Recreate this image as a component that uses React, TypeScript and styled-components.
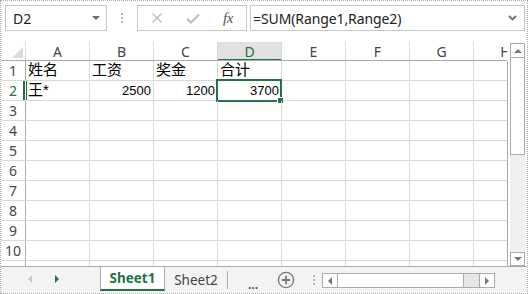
import React from 'react';
import styled, { createGlobalStyle } from 'styled-components';

const GREEN = '#217346';
const GRID = '#d9d9d9';
const FRAME = '#ababab';
const UI_FONT = '"Noto Sans", "Open Sans", sans-serif';
const CELL_FONT = '"Liberation Sans", "Noto Sans CJK SC", sans-serif';

const Global = createGlobalStyle`
  html, body { margin: 0; padding: 0; background: #fff; }
  body { width: 528px; height: 294px; overflow: hidden; }
`;

const Frame = styled.div`
  width: 528px;
  height: 294px;
  box-sizing: border-box;
  border: 1px dotted #a9a9a9;
  display: flex;
  flex-direction: column;
  background: #fff;
  font-family: ${UI_FONT};
  color: #333;
  overflow: hidden;
`;

/* ---------- formula bar ---------- */
const FormulaBar = styled.div`
  display: flex;
  align-items: stretch;
  height: 26px;
  padding: 4px 2px 0 4px;
  margin-bottom: 11px;
  flex: none;
`;

const NameBox = styled.div`
  width: 102px;
  box-sizing: border-box;
  border: 1px solid #c6c6c6;
  display: flex;
  align-items: center;
  justify-content: space-between;
  padding: 0 6px 0 7px;
  font-size: 14px;
  color: #222;
`;

const DropTriangle = styled.span`
  width: 0;
  height: 0;
  border-left: 4px solid transparent;
  border-right: 4px solid transparent;
  border-top: 4px solid #6f6f6f;
`;

const Grip = styled.div<{ $w: number; $h?: number }>`
  width: ${p => p.$w}px;
  ${p => (p.$h ? `height: ${p.$h}px;` : '')}
  display: flex;
  flex-direction: column;
  align-items: center;
  justify-content: center;
  gap: 2px;
  flex: none;
  & > i {
    display: block;
    width: 2px;
    height: 2px;
    background: #b4b4b4;
  }
`;

const ButtonsBox = styled.div`
  width: 110px;
  box-sizing: border-box;
  border: 1px solid #c6c6c6;
  display: flex;
  align-items: center;
`;

const BarButton = styled.div<{ $w: number }>`
  width: ${p => p.$w}px;
  display: flex;
  align-items: center;
  justify-content: center;
  height: 100%;
`;

const FxText = styled.span`
  font-family: "Liberation Serif", serif;
  font-style: italic;
  font-size: 15px;
  color: #555;
  letter-spacing: -0.5px;
`;

const FormulaInput = styled.div`
  flex: 1;
  margin-left: 3px;
  box-sizing: border-box;
  border: 1px solid #c6c6c6;
  display: flex;
  align-items: center;
  justify-content: space-between;
  padding: 0 7px 0 2px;
  font-size: 14px;
  letter-spacing: -0.1px;
  color: #222;
`;

/* ---------- sheet ---------- */
const SheetArea = styled.div`
  display: flex;
  height: 224px;
  flex: none;
`;

const Viewport = styled.div`
  width: 507px;
  overflow: hidden;
  display: flex;
  flex-direction: column;
  flex: none;
`;

const HeaderRow = styled.div`
  display: flex;
  flex: none;
  height: 18px;
  border-bottom: 1px solid ${FRAME};
  width: 506px;
  overflow: hidden;
`;

const BodyRows = styled.div`
  display: flex;
  flex-direction: column;
  width: 506px;
  border-right: 1px solid ${FRAME};
  overflow: hidden;
  flex: 1;
`;

const Corner = styled.div`
  width: 22px;
  border-right: 1px solid ${GRID};
  flex: none;
  display: flex;
  align-items: flex-end;
  justify-content: flex-end;
  padding: 0 2px 2px 0;
`;

const CornerTri = styled.div`
  width: 0;
  height: 0;
  border-left: 11px solid transparent;
  border-bottom: 11px solid #dcdcdc;
`;

const ColHead = styled.div<{ $sel?: boolean }>`
  width: 63px;
  flex: none;
  border-right: 1px solid ${GRID};
  display: flex;
  align-items: center;
  justify-content: center;
  font-size: 14px;
  color: ${p => (p.$sel ? GREEN : '#444')};
  background: ${p => (p.$sel ? '#e1e1e1' : '#fff')};
  box-shadow: ${p => (p.$sel ? `inset 0 -2px 0 ${GREEN}` : 'none')};
  margin-bottom: ${p => (p.$sel ? '-1px' : '0')};
`;

const BodyRow = styled.div`
  display: flex;
  flex: none;
  height: 19px;
  border-bottom: 1px solid ${GRID};
  width: 506px;
`;

const RowHead = styled.div<{ $sel?: boolean }>`
  width: 24px;
  flex: none;
  border-right: 1px solid ${p => (p.$sel ? 'transparent' : FRAME)};
  box-shadow: ${p => (p.$sel ? `inset -2px 0 0 ${GREEN}, 1px 0 0 ${GREEN}` : 'none')};
  display: flex;
  align-items: center;
  justify-content: center;
  font-size: 14px;
  color: ${p => (p.$sel ? GREEN : '#444')};
`;

const Cell = styled.div<{ $align?: 'left' | 'right'; $cjk?: boolean }>`
  width: 64px;
  flex: none;
  border-right: 1px solid ${GRID};
  display: flex;
  align-items: flex-end;
  justify-content: ${p => (p.$align === 'right' ? 'flex-end' : 'flex-start')};
  padding: 0 2px 1px 2px;
  box-sizing: border-box;
  font-family: ${CELL_FONT};
  font-size: ${p => (p.$cjk ? '15px' : '13px')};
  line-height: ${p => (p.$cjk ? '18px' : '16px')};
  color: #000;
  white-space: nowrap;
  position: relative;
`;

const Selection = styled.div`
  position: absolute;
  left: -2px;
  top: -2px;
  width: 66px;
  height: 23px;
  box-sizing: border-box;
  border: 2px solid ${GREEN};
  pointer-events: none;
`;

const FillHandle = styled.div`
  position: absolute;
  right: -4px;
  bottom: -4px;
  width: 5px;
  height: 5px;
  background: ${GREEN};
  border: 1px solid #fff;
`;

/* ---------- vertical scrollbar ---------- */
const VScroll = styled.div`
  width: 15px;
  margin-left: 2px;
  padding-top: 1px;
  display: flex;
  flex-direction: column;
  background: linear-gradient(#fff 0 1px, #f0f0f0 1px);
  flex: none;
`;

const ScrollButton = styled.div<{ $h: number }>`
  height: ${p => p.$h}px;
  box-sizing: border-box;
  border: 1px solid ${FRAME};
  background: #fff;
  display: flex;
  align-items: center;
  justify-content: center;
  flex: none;
`;

const VThumb = styled.div`
  height: 97px;
  box-sizing: border-box;
  border: 1px solid ${FRAME};
  border-top: none;
  background: #fff;
  flex: none;
`;

const Spacer = styled.div`
  flex: 1;
`;

const Tri = styled.span<{ $dir: 'up' | 'down' | 'left' | 'right'; $c?: string; $s?: number }>`
  width: 0;
  height: 0;
  ${p => {
    const s = p.$s ?? 4;
    const c = p.$c ?? '#777';
    switch (p.$dir) {
      case 'up':
        return `border-left:${s}px solid transparent;border-right:${s}px solid transparent;border-bottom:${s}px solid ${c};`;
      case 'down':
        return `border-left:${s}px solid transparent;border-right:${s}px solid transparent;border-top:${s}px solid ${c};`;
      case 'left':
        return `border-top:${s}px solid transparent;border-bottom:${s}px solid transparent;border-right:${s}px solid ${c};`;
      default:
        return `border-top:${s}px solid transparent;border-bottom:${s}px solid transparent;border-left:${s}px solid ${c};`;
    }
  }}
`;

/* ---------- tab bar ---------- */
const TabBar = styled.div`
  flex: 1;
  border-top: 1px solid ${FRAME};
  background: #f3f3f3;
  display: flex;
  align-items: flex-start;
`;

const NavArea = styled.div`
  width: 99px;
  height: 24px;
  display: flex;
  align-items: center;
  padding-left: 27px;
  gap: 23px;
  box-sizing: border-box;
`;

const Tab = styled.div<{ $active?: boolean }>`
  width: ${p => (p.$active ? 65 : 63)}px;
  height: ${p => (p.$active ? 24 : 18)}px;
  margin-top: ${p => (p.$active ? 0 : 4)}px;
  box-sizing: border-box;
  display: flex;
  align-items: center;
  justify-content: center;
  font-size: 13.5px;
  font-weight: ${p => (p.$active ? 700 : 400)};
  color: ${p => (p.$active ? GREEN : '#444')};
  background: ${p => (p.$active ? '#fff' : 'transparent')};
  border-left: ${p => (p.$active ? `1px solid ${FRAME}` : 'none')};
  border-right: 1px solid ${FRAME};
  border-bottom: ${p => (p.$active ? `2px solid ${GREEN}` : 'none')};
`;

const MoreTabs = styled.div`
  width: 38px;
  height: 24px;
  display: flex;
  align-items: flex-end;
  justify-content: center;
  color: ${GREEN};
  font-weight: 700;
  font-size: 12px;
  line-height: 12px;
  padding-left: 12px;
  box-sizing: border-box;
`;

const AddSheet = styled.div`
  width: 40px;
  height: 26px;
  display: flex;
  align-items: center;
  justify-content: center;
`;

const HScroll = styled.div`
  width: 173px;
  height: 15px;
  margin-top: 6px;
  box-sizing: border-box;
  border: 1px solid ${FRAME};
  display: flex;
  background: #e6e6e6;
`;

const HButton = styled.div<{ $side: 'left' | 'right' }>`
  width: 14px;
  background: #fff;
  display: flex;
  align-items: center;
  justify-content: center;
  ${p => (p.$side === 'left' ? `border-right:1px solid ${FRAME};` : `border-left:1px solid ${FRAME};`)}
`;

const HThumb = styled.div`
  width: 125px;
  background: #fff;
  border-right: 1px solid ${FRAME};
`;

const cols = ['A', 'B', 'C', 'D', 'E', 'F', 'G', 'H'];

type CellData = { v: string; align?: 'left' | 'right'; cjk?: boolean };
const data: Record<number, CellData[]> = {
  1: [
    { v: '姓名', cjk: true },
    { v: '工资', cjk: true },
    { v: '奖金', cjk: true },
    { v: '合计', cjk: true },
  ],
  2: [
    { v: '王*', cjk: true },
    { v: '2500', align: 'right' },
    { v: '1200', align: 'right' },
    { v: '3700', align: 'right' },
  ],
};

export default function App() {
  const rows = Array.from({ length: 11 }, (_, i) => i + 1);
  return (
    <>
      <Global />
      <Frame>
        <FormulaBar>
          <NameBox>
            <span>D2</span>
            <DropTriangle />
          </NameBox>
          <Grip $w={30}>
            <i />
            <i />
            <i />
          </Grip>
          <ButtonsBox>
            <BarButton $w={38}>
              <svg width="12" height="12" viewBox="0 0 12 12">
                <path d="M1.5 1.5 L10.5 10.5 M10.5 1.5 L1.5 10.5" stroke="#bdbdbd" strokeWidth="1.4" fill="none" />
              </svg>
            </BarButton>
            <BarButton $w={34}>
              <svg width="14" height="11" viewBox="0 0 14 11">
                <path d="M1 5.5 L5 9.5 L13 1.5" stroke="#bdbdbd" strokeWidth="2.2" fill="none" />
              </svg>
            </BarButton>
            <BarButton $w={36}>
              <FxText>fx</FxText>
            </BarButton>
          </ButtonsBox>
          <FormulaInput>
            <span>=SUM(Range1,Range2)</span>
            <svg width="9" height="6" viewBox="0 0 9 6">
              <path d="M1 1 L4.5 4.5 L8 1" stroke="#6f6f6f" strokeWidth="1.8" fill="none" />
            </svg>
          </FormulaInput>
        </FormulaBar>

        <SheetArea>
          <Viewport>
            <HeaderRow>
              <Corner>
                <CornerTri />
              </Corner>
              {cols.map(c => (
                <ColHead key={c} $sel={c === 'D'}>
                  {c}
                </ColHead>
              ))}
            </HeaderRow>
            <BodyRows>
              {rows.map(r => (
                <BodyRow key={r}>
                  <RowHead $sel={r === 2}>{r <= 10 ? r : ''}</RowHead>
                  {cols.map((c, ci) => {
                    const d = data[r]?.[ci];
                    const sel = r === 2 && c === 'D';
                    return (
                      <Cell key={c} $align={d?.align} $cjk={d?.cjk}>
                        {d?.v}
                        {sel && (
                          <Selection>
                            <FillHandle />
                          </Selection>
                        )}
                      </Cell>
                    );
                  })}
                </BodyRow>
              ))}
            </BodyRows>
          </Viewport>
          <VScroll>
            <ScrollButton $h={15}>
              <Tri $dir="up" $s={4} />
            </ScrollButton>
            <VThumb />
            <Spacer />
            <ScrollButton $h={14}>
              <Tri $dir="down" $s={4} />
            </ScrollButton>
          </VScroll>
        </SheetArea>

        <TabBar>
          <NavArea>
            <Tri $dir="left" $s={4} $c="#c8c8c8" />
            <Tri $dir="right" $s={4} $c={GREEN} />
          </NavArea>
          <Tab $active>Sheet1</Tab>
          <Tab>Sheet2</Tab>
          <MoreTabs>...</MoreTabs>
          <AddSheet>
            <svg width="18" height="18" viewBox="0 0 18 18">
              <circle cx="9" cy="9" r="7.6" stroke="#777" strokeWidth="1.4" fill="none" />
              <path d="M9 4.8 V13.2 M4.8 9 H13.2" stroke="#777" strokeWidth="1.8" />
            </svg>
          </AddSheet>
          <Grip $w={16} $h={26}>
            <i />
            <i />
            <i />
          </Grip>
          <HScroll>
            <HButton $side="left">
              <Tri $dir="left" $s={4} />
            </HButton>
            <HThumb />
            <Spacer />
            <HButton $side="right">
              <Tri $dir="right" $s={4} />
            </HButton>
          </HScroll>
        </TabBar>
      </Frame>
    </>
  );
}
